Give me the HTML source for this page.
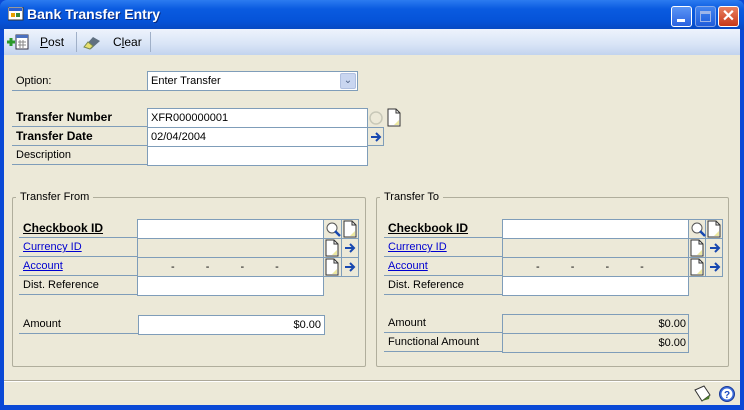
<!DOCTYPE html>
<html><head><meta charset="utf-8"><style>
*{margin:0;padding:0;box-sizing:border-box}
body{width:744px;height:410px;overflow:hidden;background:#0a49d6;font-family:"Liberation Sans",sans-serif;font-size:11px;color:#000;position:relative}
.a{position:absolute}
#title{left:0;top:0;width:744px;height:30px;background:linear-gradient(#2c7bf0,#0a5be0 30%,#0553d8 70%,#0748c0);border-radius:7px 7px 0 0}
#win{left:4px;top:29px;width:736px;height:376px;background:#ece9d8}
#tb{left:4px;top:29px;width:736px;height:26px;background:linear-gradient(#eef3fc,#d8e4f6 60%,#c2d3ee)}
.lbl{position:absolute;height:19px;line-height:19px;padding-left:4px;border-bottom:1px solid #7f9db9}
.fld{position:absolute;background:#fff;border:1px solid #7f9db9;height:20px;line-height:18px;padding-left:3px}
.b{font-weight:bold;font-size:12px}
.lnk{color:#0000d0;text-decoration:underline}
.grp{position:absolute;border:1px solid #b0ae9c;border-radius:2px}
.leg{position:absolute;background:#ece9d8;padding:0 4px;top:-7px;left:3px;line-height:13px}
.ic{position:absolute;width:17px;height:19px;border:1px solid #7f9db9;background:#ece9d8}
</style></head><body>
<div class="a" id="title"></div>
<svg class="a" style="left:8px;top:7px" width="16" height="14"><rect x="0" y="0" width="15" height="13" fill="#fff" stroke="#333"/><rect x="1" y="1" width="13" height="3" fill="#2a5fd0"/><rect x="3" y="6" width="4" height="4" fill="#e8a000"/><rect x="8" y="6" width="4" height="4" fill="#3a8a3a"/></svg>
<div class="a" style="left:27px;top:6px;color:#fff;font-weight:bold;font-size:14px;text-shadow:1px 1px #0a2a80">Bank Transfer Entry</div>
<div class="a" style="left:671px;top:6px;width:21px;height:21px;border:1px solid #fff;border-radius:3px;background:linear-gradient(#5a95f5,#2a62e0)"><div class="a" style="left:5px;top:12px;width:8px;height:3px;background:#fff"></div></div>
<div class="a" style="left:695px;top:6px;width:21px;height:21px;border:1px solid #b8c8f0;border-radius:3px;background:linear-gradient(#5a95f5,#2a62e0);opacity:.7"><div class="a" style="left:4px;top:4px;width:11px;height:11px;border:1px solid #dde;border-top-width:3px"></div></div>
<div class="a" style="left:718px;top:6px;width:21px;height:21px;border:1px solid #fff;border-radius:3px;background:linear-gradient(#e88060,#c83818);color:#fff;font-weight:bold;font-size:16px;line-height:19px;text-align:center">✕</div>
<div class="a" id="win"></div>
<div class="a" id="tb"></div>
<svg class="a" style="left:6px;top:33px" width="24" height="18"><path d="M1 9h8M5 5v8" stroke="#2a9a2a" stroke-width="3"/><rect x="10" y="2" width="12" height="14" fill="#fff" stroke="#334"/><rect x="10" y="2" width="12" height="3" fill="#4a70c0"/><path d="M12 9h8M12 12h8M14 7v8M17 7v8" stroke="#888"/></svg>
<div class="a" style="left:40px;top:35px;font-size:12px"><u>P</u>ost</div>
<div class="a" style="left:76px;top:32px;width:1px;height:20px;background:#a0b0c8"></div>
<svg class="a" style="left:82px;top:33px" width="20" height="18"><path d="M2 14l9-10 7 4-9 8z" fill="#607080"/><path d="M2 14l4-5 5 4-3 3z" fill="#e8e070" stroke="#7a8a50"/></svg>
<div class="a" style="left:113px;top:35px;font-size:12px">C<u>l</u>ear</div>
<div class="a" style="left:150px;top:32px;width:1px;height:20px;background:#a0b0c8"></div>

<div class="lbl" style="left:12px;top:71px;width:135px;height:20px;line-height:20px">Option:</div>
<div class="fld" style="left:147px;top:71px;width:211px">Enter Transfer</div>
<div class="a" style="left:340px;top:73px;width:16px;height:16px;background:#c9d6f0;border:1px solid #b0c0e0;border-radius:2px;text-align:center;line-height:14px;color:#4d6185;font-size:10px">&#8964;</div>

<div class="lbl b" style="left:12px;top:108px;width:135px">Transfer Number</div>
<div class="lbl b" style="left:12px;top:127px;width:135px">Transfer Date</div>
<div class="lbl" style="left:12px;top:146px;width:135px">Description</div>
<div class="fld" style="left:147px;top:108px;width:221px">XFR000000001</div>
<div class="fld" style="left:147px;top:127px;width:221px">02/04/2004</div>
<div class="fld" style="left:147px;top:146px;width:221px"></div>
<svg class="a" style="left:368px;top:109px" width="16" height="17"><circle cx="8" cy="9" r="6" fill="none" stroke="#c8c8b8" stroke-width="1.5"/></svg>
<svg class="a" style="left:386px;top:108px" width="16" height="19"><path d="M2 1h8l4 4v13H2z" fill="#fff" stroke="#333"/><path d="M10 1v4h4" fill="none" stroke="#333"/><path d="M8 17l5-5v5z" fill="#ece8a0"/></svg>
<div class="ic" style="left:367px;top:127px"></div>
<svg class="a" style="left:369px;top:130px" width="14" height="14"><path d="M2 7h8M7 3l4 4-4 4" stroke="#1848b0" stroke-width="2" fill="none"/></svg>

<div class="grp" style="left:12px;top:197px;width:354px;height:170px"><div class="leg">Transfer From</div></div>
<div class="grp" style="left:376px;top:197px;width:353px;height:170px"><div class="leg">Transfer To</div></div>

<div class="lbl b" style="left:19px;top:219px;width:119px"><u>Checkbook ID</u></div>
<div class="lbl lnk" style="left:19px;top:238px;width:119px">Currency ID</div>
<div class="lbl lnk" style="left:19px;top:257px;width:119px">Account</div>
<div class="lbl" style="left:19px;top:276px;width:119px">Dist. Reference</div>
<div class="fld" style="left:137px;top:219px;width:187px"></div>
<div class="a" style="left:137px;top:238px;width:187px;height:39px;border:1px solid #7f9db9;border-top:0"></div>
<div class="a" style="left:137px;top:257px;width:187px;height:1px;background:#7f9db9"></div>
<div class="a" style="left:137px;top:258px;width:187px;line-height:19px;word-spacing:28px;padding-left:34px">- - - -</div>
<div class="fld" style="left:137px;top:276px;width:187px"></div>
<div class="lbl" style="left:19px;top:315px;width:119px">Amount</div>
<div class="fld" style="left:138px;top:315px;width:187px;text-align:right;padding-right:3px">$0.00</div>
<div class="a" style="left:323px;top:219px;width:36px;height:58px;border:1px solid #7f9db9"></div>
<div class="a" style="left:341px;top:219px;width:1px;height:58px;background:#7f9db9"></div>
<div class="a" style="left:323px;top:238px;width:36px;height:1px;background:#7f9db9"></div>
<div class="a" style="left:323px;top:257px;width:36px;height:1px;background:#7f9db9"></div>

<div class="lbl b" style="left:384px;top:219px;width:119px"><u>Checkbook ID</u></div>
<div class="lbl lnk" style="left:384px;top:238px;width:119px">Currency ID</div>
<div class="lbl lnk" style="left:384px;top:257px;width:119px">Account</div>
<div class="lbl" style="left:384px;top:276px;width:119px">Dist. Reference</div>
<div class="fld" style="left:502px;top:219px;width:187px"></div>
<div class="a" style="left:502px;top:238px;width:187px;height:39px;border:1px solid #7f9db9;border-top:0"></div>
<div class="a" style="left:502px;top:257px;width:187px;height:1px;background:#7f9db9"></div>
<div class="a" style="left:502px;top:258px;width:187px;line-height:19px;word-spacing:28px;padding-left:34px">- - - -</div>
<div class="fld" style="left:502px;top:276px;width:187px"></div>
<div class="a" style="left:688px;top:219px;width:35px;height:58px;border:1px solid #7f9db9"></div>
<div class="a" style="left:705px;top:219px;width:1px;height:58px;background:#7f9db9"></div>
<div class="a" style="left:688px;top:238px;width:35px;height:1px;background:#7f9db9"></div>
<div class="a" style="left:688px;top:257px;width:35px;height:1px;background:#7f9db9"></div>
<div class="lbl" style="left:384px;top:314px;width:119px">Amount</div>
<div class="lbl" style="left:384px;top:333px;width:119px">Functional Amount</div>
<div class="a" style="left:502px;top:314px;width:187px;height:39px;border:1px solid #7f9db9"></div>
<div class="a" style="left:502px;top:333px;width:187px;height:1px;background:#7f9db9"></div>
<div class="a" style="left:502px;top:315px;width:184px;line-height:18px;text-align:right">$0.00</div>
<div class="a" style="left:502px;top:334px;width:184px;line-height:18px;text-align:right">$0.00</div>

<svg class="a" style="left:0;top:0" width="744" height="410">
<defs>
<g id="doc"><path d="M2 1h8l4 4v12H2z" fill="#fff" stroke="#333"/><path d="M10 1v4h4" fill="none" stroke="#333"/><path d="M8 16l5-5v5z" fill="#ece8a0"/></g>
<g id="arr"><path d="M3 9h8M8 5l4 4-4 4" stroke="#1848b0" stroke-width="2" fill="none"/></g>
<g id="mag"><circle cx="7" cy="7" r="5" fill="#fff" stroke="#555"/><path d="M10 10l5 5" stroke="#1848b0" stroke-width="2.5"/></g>
</defs>
<use href="#mag" x="325" y="221"/><use href="#doc" x="342" y="220"/>
<use href="#doc" x="324" y="239"/><use href="#arr" x="342" y="239"/>
<use href="#doc" x="324" y="258"/><use href="#arr" x="342" y="258"/>
<use href="#mag" x="690" y="221"/><use href="#doc" x="706" y="220"/>
<use href="#doc" x="689" y="239"/><use href="#arr" x="707" y="239"/>
<use href="#doc" x="689" y="258"/><use href="#arr" x="707" y="258"/>
</svg>

<div class="a" style="left:4px;top:380px;width:736px;height:1px;background:#aca899"></div>
<div class="a" style="left:4px;top:381px;width:736px;height:1px;background:#fff"></div>
<svg class="a" style="left:692px;top:384px" width="22" height="20"><path d="M3 6l9-4 6 9-8 6z" fill="#fff" stroke="#333"/><path d="M10 17l8-6-1 4z" fill="#4a7a2a"/></svg>
<svg class="a" style="left:718px;top:385px" width="18" height="18"><circle cx="9" cy="9" r="7.5" fill="#3a6ad8" stroke="#1a3a98"/><circle cx="9" cy="9" r="5.5" fill="#fff"/><text x="9" y="13" font-size="10" font-weight="bold" text-anchor="middle" fill="#1a4ac0" font-family="Liberation Sans">?</text></svg>
</body></html>
